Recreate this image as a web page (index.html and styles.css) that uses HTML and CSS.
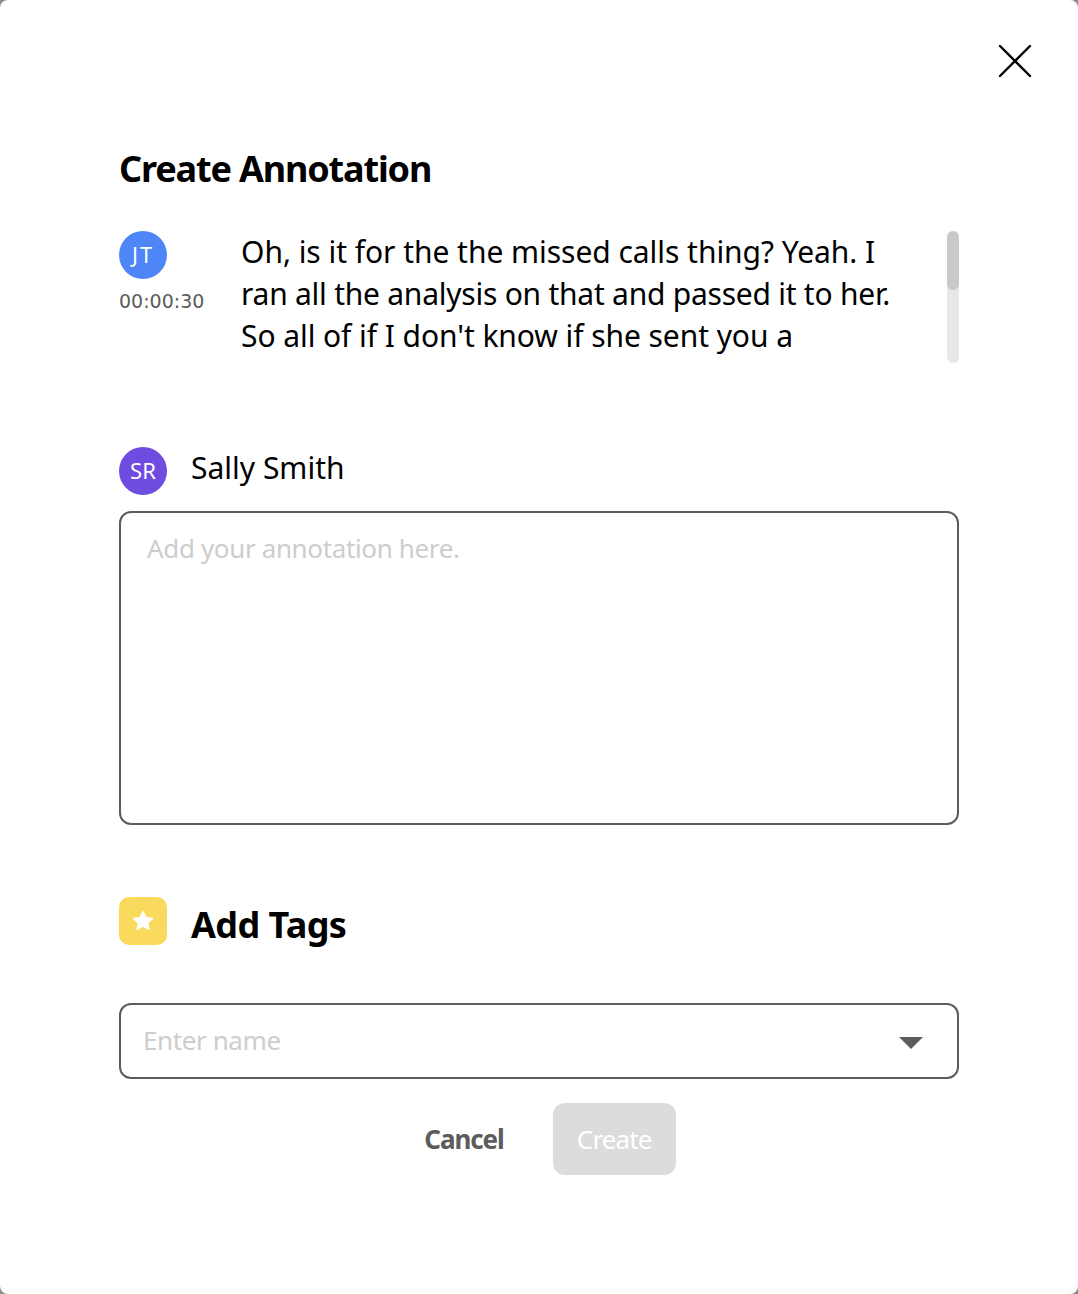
FILE: index.html
```html
<!DOCTYPE html>
<html lang="en">
<head>
<meta charset="utf-8">
<title>Create Annotation</title>
<link rel="stylesheet" href="styles.css">
</head>
<body>
<main class="modal">
  <button class="close" aria-label="Close">
    <svg width="34" height="34" viewBox="0 0 34 34"><path d="M2 2 L32 32 M32 2 L2 32" stroke="#000" stroke-width="2.4" stroke-linecap="round" fill="none"/></svg>
  </button>
  <h1 class="title">Create Annotation</h1>
  <section class="transcript">
    <div class="speaker">
      <div class="avatar blue">JT</div>
      <div class="time">00:00:30</div>
    </div>
    <p class="quote"><span class="line-a">Oh, is it for the the missed calls thing? Yeah. I</span><br><span class="line-b">ran all the analysis on that and passed it to her.</span><br><span class="line-c">So all of if I don't know if she sent you a</span></p>
    <div class="scrollbar"><div class="thumb"></div></div>
  </section>
  <section class="author">
    <div class="avatar purple">SR</div>
    <div class="author-name">Sally Smith</div>
  </section>
  <div class="textarea">Add your annotation here.</div>
  <section class="tags-head">
    <div class="star-box">
      <svg width="24" height="24" viewBox="0 0 24 24"><path d="M12 2.6 L14.9 8.6 L21.5 9.4 L16.7 13.9 L18 20.4 L12 17.2 L6 20.4 L7.3 13.9 L2.5 9.4 L9.1 8.6 Z" fill="#fff" stroke="#fff" stroke-width="1.4" stroke-linejoin="round"/></svg>
    </div>
    <h2 class="tags-title">Add Tags</h2>
  </section>
  <div class="select">
    <span class="select-placeholder">Enter name</span>
    <svg class="caret" width="24" height="12" viewBox="0 0 24 12"><path d="M0 0 H24 L12 12 Z" fill="#5c5c5c"/></svg>
  </div>
  <div class="actions">
    <button class="cancel">Cancel</button>
    <button class="create">Create</button>
  </div>
</main>
</body>
</html>
```
FILE: styles.css
```css
* { box-sizing: border-box; }
html, body { margin: 0; height: 100%; }
body {
  width: 1078px;
  height: 1294px;
  overflow: hidden;
  background: #8c8c8c;
  font-family: "Noto Sans", "Open Sans", sans-serif;
}
.modal {
  position: relative;
  width: 1078px;
  height: 1294px;
  background: #fff;
  border-radius: 8px;
  padding: 144px 119px 0;
}
.close {
  position: absolute;
  top: 44px;
  left: 998px;
  width: 34px;
  height: 34px;
  padding: 0;
  border: 0;
  background: none;
  display: flex;
}
.title {
  margin: 0;
  font-size: 36px;
  line-height: 50px;
  font-weight: 700;
  letter-spacing: -1.15px;
  color: #000;
}
.transcript {
  display: flex;
  margin-top: 37px;
  height: 132px;
}
.speaker { width: 122px; flex: none; }
.avatar {
  width: 48px;
  height: 48px;
  border-radius: 50%;
  color: #fff;
  font-size: 22px;
  padding-bottom: 2px;
  display: flex;
  align-items: center;
  justify-content: center;
  flex: none;
}
.blue { background: #4f86f7; letter-spacing: 2px; }
.purple { background: #6e4ce0; }
.time {
  margin-top: 9px;
  font-family: "DejaVu Sans", sans-serif;
  font-size: 19px;
  line-height: 26px;
  color: #5c5c5c;
}
.quote {
  margin: 0;
  flex: 1;
  font-size: 30px;
  line-height: 42px;
  color: #000;
  white-space: nowrap;
}
.line-a { letter-spacing: -0.04px; }
.line-b { letter-spacing: -0.24px; }
.line-c { letter-spacing: -0.07px; }
.scrollbar {
  width: 12px;
  height: 132px;
  border-radius: 6px;
  background: #e8e8e8;
  flex: none;
}
.thumb {
  height: 59px;
  border-radius: 6px;
  background: #c9c9c9;
}
.author {
  display: flex;
  align-items: flex-start;
  gap: 24px;
  margin-top: 84px;
}
.author-name {
  font-size: 30px;
  line-height: 42px;
  color: #000;
}
.textarea {
  margin-top: 16px;
  height: 314px;
  border: 2px solid #5c5c5c;
  border-radius: 12px;
  padding: 16px 26px;
  font-size: 26px;
  line-height: 38px;
  letter-spacing: -0.36px;
  color: #cdcdcd;
}
.tags-head {
  display: flex;
  align-items: flex-start;
  gap: 24px;
  height: 48px;
  margin-top: 72px;
}
.star-box {
  width: 48px;
  height: 48px;
  border-radius: 10px;
  background: #f9da5c;
  display: flex;
  align-items: center;
  justify-content: center;
}
.tags-title {
  margin: 0;
  font-size: 36px;
  line-height: 56px;
  font-weight: 700;
  letter-spacing: -0.6px;
  color: #000;
}
.select {
  margin-top: 58px;
  height: 76px;
  border: 2px solid #5c5c5c;
  border-radius: 12px;
  padding: 0 34px 0 22px;
  display: flex;
  align-items: center;
  justify-content: space-between;
}
.select-placeholder {
  font-size: 26px;
  line-height: 34px;
  margin-bottom: 2px;
  letter-spacing: -0.4px;
  color: #cdcdcd;
}
.caret { margin-top: 3px; }
.actions {
  display: flex;
  justify-content: center;
  align-items: center;
  gap: 49px;
  margin-top: 24px;
  padding-left: 22px;
}
.actions button {
  font-family: inherit;
  font-size: 26px;
  border: 0;
  padding: 0;
}
.cancel {
  background: none;
  font-weight: 700;
  letter-spacing: -1.1px;
  color: #5c5c5c;
}
.create {
  width: 123px;
  height: 72px;
  border-radius: 12px;
  background: #dcdcdc;
  letter-spacing: -0.9px;
  color: #fff;
}
```
